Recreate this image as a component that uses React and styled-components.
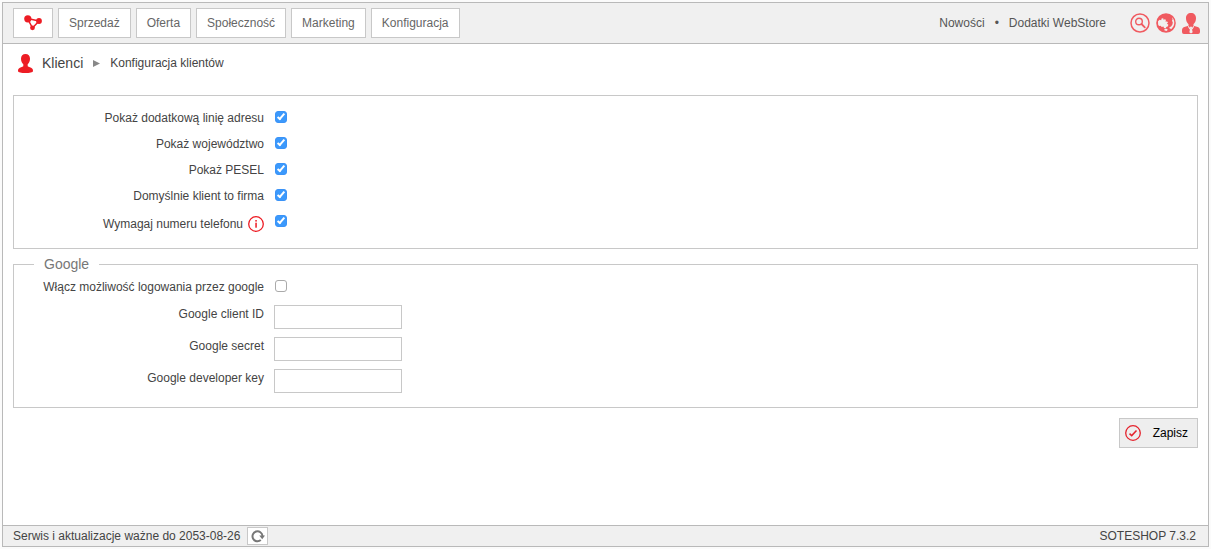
import React from "react";
import styled, { createGlobalStyle } from "styled-components";

const GlobalStyle = createGlobalStyle`
  *, *::before, *::after { box-sizing: border-box; }
  body {
    margin: 0;
    background: #fbfbfb;
    color: #444;
    font: 12px/16px "Liberation Sans", Arial, Helvetica, sans-serif;
  }
  svg { display: block; flex: none; }
`;

const Page = styled.div`
  display: flex;
  min-height: 100vh;
  padding: 2px;
`;

const Frame = styled.div`
  display: flex;
  flex: 1;
  flex-direction: column;
  border: 1px solid #b9b9b9;
  background: #fff;
`;

const Header = styled.header`
  display: flex;
  align-items: center;
  justify-content: space-between;
  padding: 5px 8px 5px 10px;
  border-bottom: 1px solid #b9b9b9;
  background: #f0f0f0;
`;

const Nav = styled.nav`
  display: flex;
  gap: 5px;
`;

const NavButton = styled.button`
  display: flex;
  align-items: center;
  height: 30px;
  padding: 0 10px;
  border: 1px solid #c8c8c8;
  background: #fff;
  color: #666;
  font: inherit;
  cursor: pointer;
`;

const Links = styled.div`
  display: flex;
  align-items: center;
  gap: 10px;
  color: #555;
`;

const TextLink = styled.a`
  color: inherit;
  text-decoration: none;
`;

const Tools = styled.div`
  display: flex;
  align-items: center;
  gap: 6px;
  margin-left: 14px;
`;

const IconLink = styled.a`
  display: flex;
  color: #f05a60;
`;

const Main = styled.main`
  flex: 1;
  padding: 0 10px;
`;

const Breadcrumb = styled.nav`
  display: flex;
  align-items: center;
  gap: 10px;
  height: 38px;
  margin-bottom: 13px;
  padding-left: 5px;
`;

const Section = styled.a`
  display: flex;
  align-items: center;
  gap: 9px;
  color: #444;
  font-size: 14px;
  text-decoration: none;
`;

const Group = styled.fieldset`
  min-width: 0;
  margin: 0 0 7px;
  padding: ${({ $titled }) => ($titled ? "7px" : "14px")} 0 14px;
  border: 1px solid #c8c8c8;
`;

const Legend = styled.legend`
  margin-left: 20px;
  padding: 0 10px;
  color: #777;
  font-size: 14px;
`;

const Rows = styled.div`
  display: flex;
  flex-direction: column;
  gap: ${({ $gap }) => $gap}px;
`;

const Row = styled.div`
  display: grid;
  grid-template-columns: 250px 1fr;
  column-gap: 10px;
  align-items: start;
`;

const Label = styled.label`
  display: flex;
  align-items: center;
  justify-content: flex-end;
  gap: 5px;
  line-height: ${({ $line = 16 }) => $line}px;
`;

const Checkbox = styled.input.attrs({ type: "checkbox" })`
  display: grid;
  place-content: center;
  width: 12px;
  height: 12px;
  margin: 1px;
  border: 1px solid #aaa;
  border-radius: 3px;
  background: #fff;
  appearance: none;

  &:checked {
    border-color: #3b93f7;
    background: #3b99fc;
  }

  &:checked::after {
    width: 4px;
    height: 8px;
    margin-bottom: 2px;
    border: solid #fff;
    border-width: 0 2px 2px 0;
    content: "";
    transform: rotate(40deg);
  }
`;

const TextInput = styled.input.attrs({ type: "text" })`
  width: 128px;
  height: 24px;
  padding: 2px 4px;
  border: 1px solid #c8c8c8;
  border-radius: 0;
  background: #fff;
  font: inherit;
`;

const Actions = styled.div`
  display: flex;
  justify-content: flex-end;
  padding: 3px 0 10px;
`;

const SaveButton = styled.button`
  display: flex;
  align-items: center;
  gap: 12px;
  height: 30px;
  padding: 0 9px 0 5px;
  border: 1px solid #c8c8c8;
  background: #eee;
  color: #000;
  font: inherit;
  cursor: pointer;
`;

const Footer = styled.footer`
  display: flex;
  align-items: center;
  justify-content: space-between;
  padding: 1px 12px 1px 10px;
  border-top: 1px solid #b9b9b9;
  background: #f0f0f0;
`;

const Service = styled.div`
  display: flex;
  align-items: center;
  gap: 7px;
`;

const RefreshButton = styled.button`
  display: flex;
  align-items: center;
  justify-content: center;
  width: 21px;
  height: 18px;
  padding: 0;
  border: 1px solid #c8c8c8;
  background: #fff;
  color: #777;
  cursor: pointer;
`;

const GraphLogo = () => (
  <svg width="18" height="16" viewBox="0 0 18 16" fill="#ed1c24" aria-hidden="true">
    <path d="M3.500 3.500 15 6 8.500 13Z" fill="none" stroke="#ed1c24" strokeWidth="1.500" />
    <circle cx="3.800" cy="3.800" r="3.600" />
    <circle cx="15" cy="6" r="2.900" />
    <circle cx="8.500" cy="12.800" r="2.400" />
  </svg>
);

const ClientIcon = () => (
  <svg width="15" height="19" viewBox="0 0 15 19" fill="#ed1c24" aria-hidden="true">
    <path d="M7.500 0C10.300 0 12 2 12 4.800c0 2.300-1 4.200-2.300 5.500v2c1 .9 3.300 1.100 4.400 2.100.7.600.9 1.500.9 2.600 0 1.500-3.500 2-7.500 2S0 18.500 0 17c0-1.100.2-2 .9-2.600 1.100-1 3.400-1.200 4.400-2.100v-2C4 9 3 7.100 3 4.800 3 2 4.700 0 7.500 0Z" />
  </svg>
);

const SearchIcon = () => (
  <svg width="20" height="20" viewBox="0 0 20 20" fill="none" stroke="currentColor" aria-hidden="true">
    <circle cx="10" cy="10" r="9" strokeWidth="1.500" />
    <circle cx="9" cy="8.500" r="3.300" strokeWidth="1.400" />
    <path d="m11.500 11 3.300 3.300" strokeWidth="1.800" strokeLinecap="round" />
  </svg>
);

const GlobeIcon = () => (
  <svg width="20" height="20" viewBox="0 0 20 20" aria-hidden="true">
    <circle cx="10" cy="10" r="9.800" fill="currentColor" />
    <path
      fill="#f0f0f0"
      d="M2 8.200 3.600 6.800l1.600.4.400-1.700 1.600-.2.300 1.500 1.500-.6 1 .8-.6 1.600 1.800-.2.800 1.300-1.200 1 1.500.8-.3 1.700-1.700.7-.6 1.600-1.700-.4-.6-1.500-1.600.5-1.200-1.300-1.600.2-.9-1.500ZM16 4.200c1.600 1.700 2.400 3.600 2.300 5.900-.1 2.400-1.100 4.300-2.900 5.800l-1.700-.3-.3-1.300 1.700-.8 1.300-1.900.4-2.200-.8-1.700.6-1.500ZM8.200 16.200l2.300-.5 1.300 1-1.200 1.200-2-.3Z"
    />
  </svg>
);

const AccountIcon = () => (
  <svg width="18" height="21" viewBox="0 0 19 22" aria-hidden="true">
    <path
      fill="currentColor"
      d="M9.500 0c3.300 0 5.300 2.200 5.300 5.400 0 2.800-1.100 4.800-2.700 6.300v1.600l4.500 1.500c1.600.6 2.400 1.700 2.400 3.700v1.500q0 2-2 2H2q-2 0-2-2v-1.500c0-2 .8-3.100 2.400-3.700l4.500-1.500v-1.600C5.300 10.200 4.200 8.200 4.200 5.400 4.200 2.200 6.200 0 9.500 0Z"
    />
    <path
      fill="none"
      stroke="#f0f0f0"
      strokeWidth="1.100"
      d="m6.600 13.800 1.500 2.600 1.400-1.600 1.400 1.600 1.500-2.600"
    />
    <path fill="#f0f0f0" d="M8.800 15.800h1.400l1.100 4.500-1.800 1.300-1.800-1.300Z" />
  </svg>
);

const ArrowIcon = () => (
  <svg width="7" height="8" viewBox="0 0 7 8" fill="#888" aria-hidden="true">
    <path d="m0 1 7 3.500L0 8Z" />
  </svg>
);

const InfoIcon = () => (
  <svg width="16" height="16" viewBox="0 0 16 16" fill="#ed1c24" aria-hidden="true">
    <circle cx="8" cy="8" r="7.300" fill="none" stroke="#ed1c24" strokeWidth="1.300" />
    <rect x="7.300" y="4" width="1.500" height="1.600" />
    <rect x="7.300" y="6.700" width="1.500" height="5" />
  </svg>
);

const SaveIcon = () => (
  <svg width="16" height="16" viewBox="0 0 16 16" fill="none" stroke="#e5232d" aria-hidden="true">
    <circle cx="8" cy="8" r="7.300" strokeWidth="1.300" />
    <path d="m4.500 8.600 2.200 2 4.800-5.200" strokeWidth="1.500" />
  </svg>
);

const RefreshIcon = () => (
  <svg width="14" height="14" viewBox="0 0 14 14" aria-hidden="true">
    <path d="M9.800 11.100A5 5 0 1 1 11.500 7" fill="none" stroke="currentColor" strokeWidth="2" />
    <path d="M8.300 6.500H14l-2.800 3.700Z" fill="currentColor" />
  </svg>
);

const menu = ["Sprzedaż", "Oferta", "Społeczność", "Marketing", "Konfiguracja"];

const options = [
  { id: "address", label: "Pokaż dodatkową linię adresu" },
  { id: "province", label: "Pokaż województwo" },
  { id: "pesel", label: "Pokaż PESEL" },
  { id: "company", label: "Domyślnie klient to firma" },
  { id: "phone", label: "Wymagaj numeru telefonu", info: true },
];

const fields = [
  { id: "client-id", label: "Google client ID" },
  { id: "secret", label: "Google secret" },
  { id: "developer-key", label: "Google developer key" },
];

export default function App() {
  return (
    <Page>
      <GlobalStyle />
      <Frame>
        <Header>
          <Nav>
            <NavButton type="button" aria-label="Start">
              <GraphLogo />
            </NavButton>
            {menu.map((item) => (
              <NavButton type="button" key={item}>{item}</NavButton>
            ))}
          </Nav>
          <Links>
            <TextLink href="#news">Nowości</TextLink>
            <span>•</span>
            <TextLink href="#webstore">Dodatki WebStore</TextLink>
            <Tools>
              <IconLink href="#search" aria-label="Szukaj"><SearchIcon /></IconLink>
              <IconLink href="#shop" aria-label="Sklep"><GlobeIcon /></IconLink>
              <IconLink href="#account" aria-label="Konto"><AccountIcon /></IconLink>
            </Tools>
          </Links>
        </Header>

        <Main>
          <Breadcrumb>
            <Section href="#clients"><ClientIcon />Klienci</Section>
            <ArrowIcon />
            <span>Konfiguracja klientów</span>
          </Breadcrumb>

          <form onSubmit={(event) => event.preventDefault()}>
            <Group>
              <Rows $gap={10}>
                {options.map(({ id, label, info }) => (
                  <Row key={id}>
                    <Label htmlFor={id} $line={info ? 20 : 16}>
                      {label}
                      {info && <InfoIcon />}
                    </Label>
                    <Checkbox id={id} defaultChecked />
                  </Row>
                ))}
              </Rows>
            </Group>

            <Group $titled>
              <Legend>Google</Legend>
              <Rows $gap={10}>
                <Row>
                  <Label htmlFor="google-login">Włącz możliwość logowania przez google</Label>
                  <Checkbox id="google-login" />
                </Row>
                <Rows $gap={8}>
                  {fields.map(({ id, label }) => (
                    <Row key={id}>
                      <Label htmlFor={id} $line={18}>{label}</Label>
                      <TextInput id={id} />
                    </Row>
                  ))}
                </Rows>
              </Rows>
            </Group>

            <Actions>
              <SaveButton type="submit"><SaveIcon />Zapisz</SaveButton>
            </Actions>
          </form>
        </Main>

        <Footer>
          <Service>
            Serwis i aktualizacje ważne do 2053-08-26
            <RefreshButton type="button" aria-label="Odśwież"><RefreshIcon /></RefreshButton>
          </Service>
          <span>SOTESHOP 7.3.2</span>
        </Footer>
      </Frame>
    </Page>
  );
}
